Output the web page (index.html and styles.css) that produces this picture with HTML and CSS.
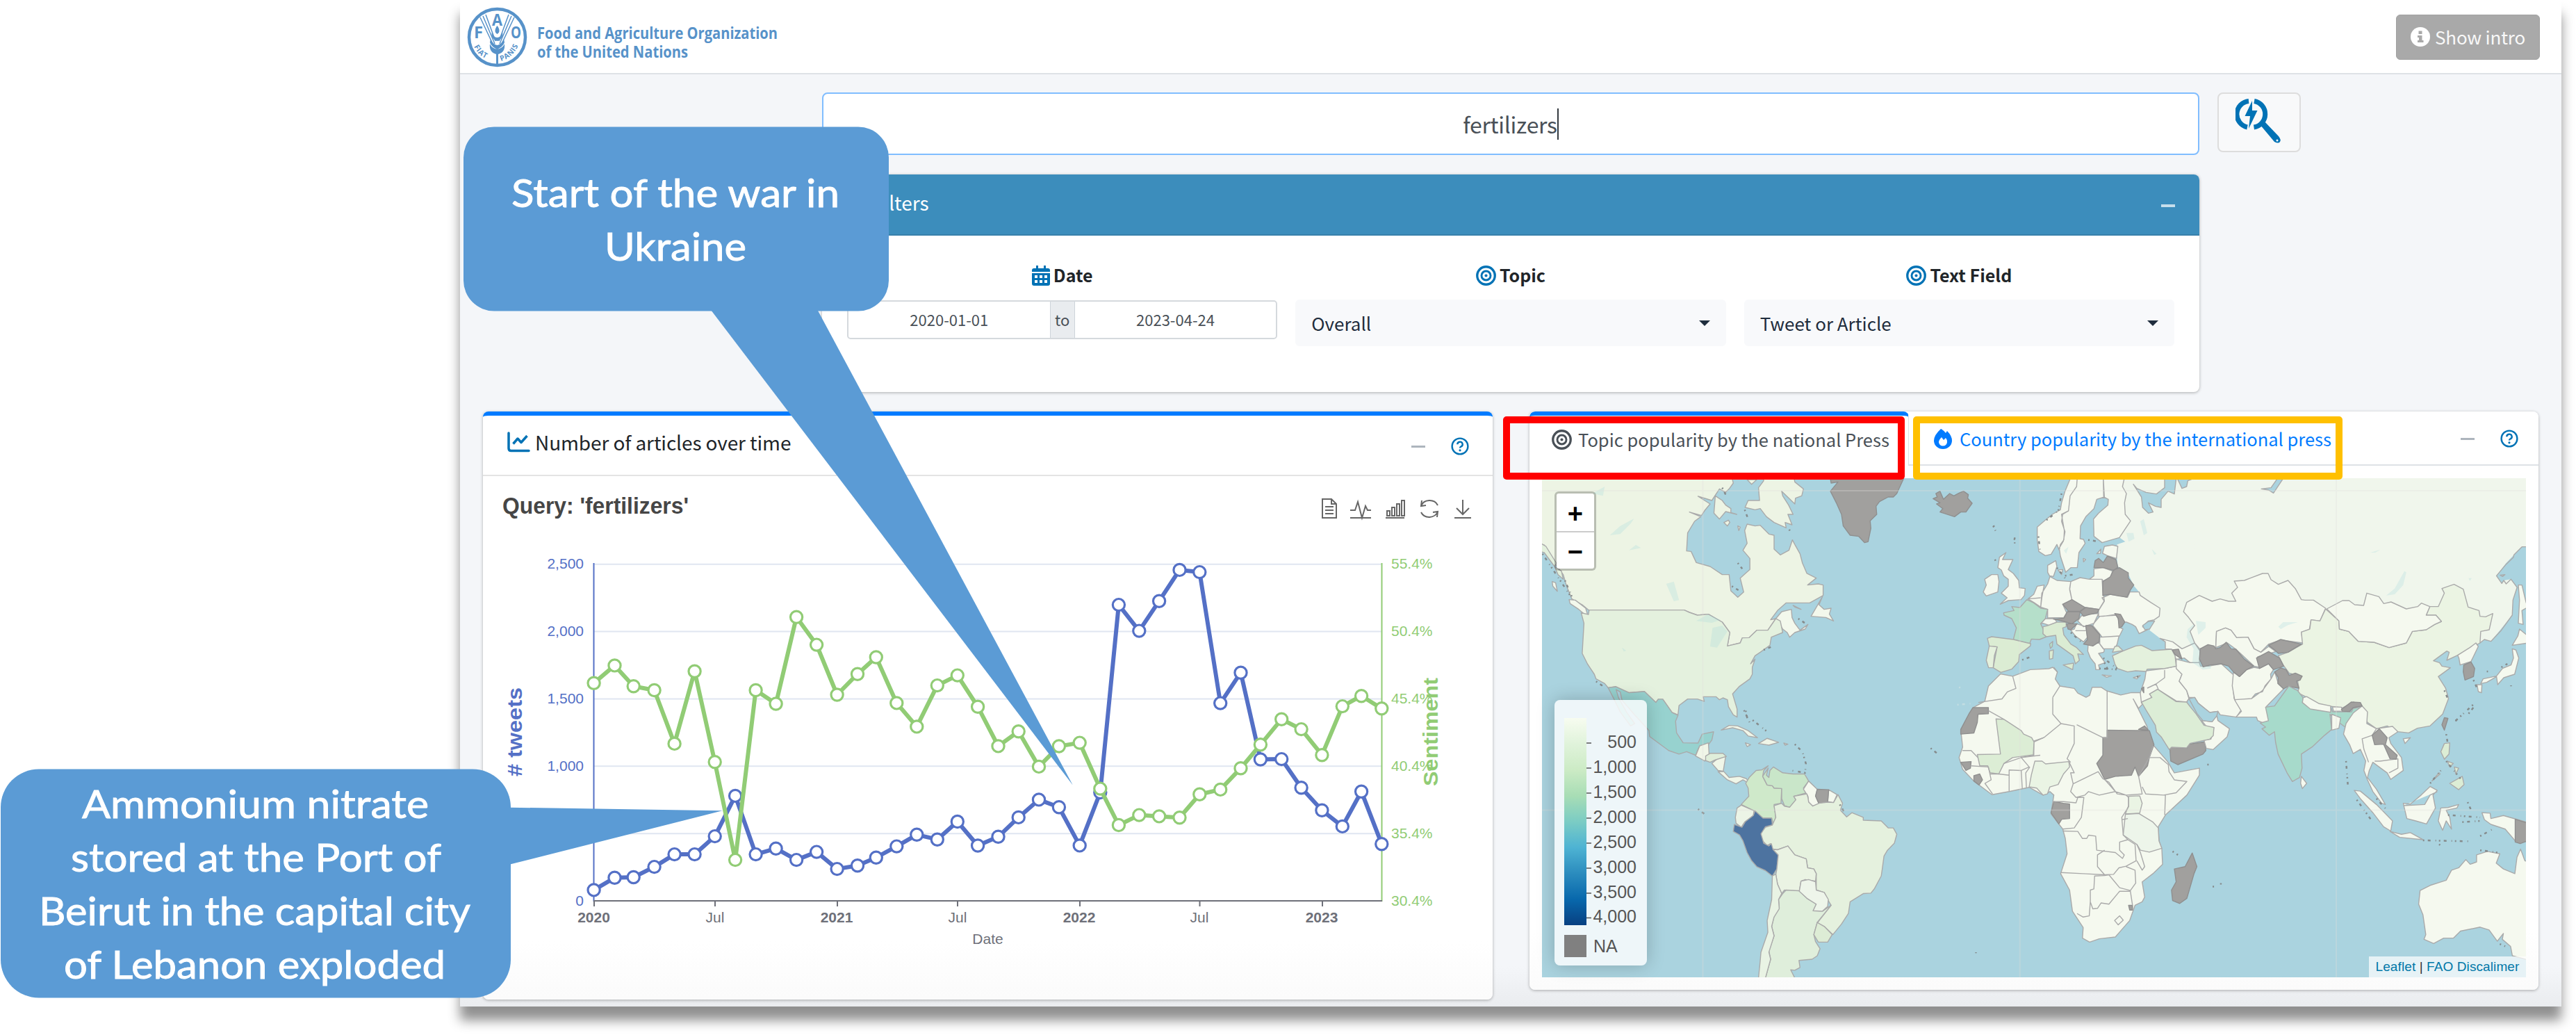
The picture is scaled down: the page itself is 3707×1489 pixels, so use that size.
FILE: index.html
```html
<!DOCTYPE html>
<html lang="en">
<head>
<meta charset="utf-8">
<title>FAO Data Lab – fertilizers</title>
<link rel="stylesheet" href="styles.css">
</head>
<body>
<svg width="0" height="0" class="defs">
  <symbol id="i-target" viewBox="0 0 28 28"><g fill="none" stroke="currentColor"><circle cx="14" cy="14" r="12.3" stroke-width="3.2"/><circle cx="14" cy="14" r="6.3" stroke-width="2.8"/></g><circle cx="14" cy="14" r="2" fill="currentColor"/></symbol>
  <symbol id="i-help" viewBox="0 0 26 26"><circle cx="13" cy="13" r="11.4" fill="none" stroke="currentColor" stroke-width="2.4"/><path d="M9.3 10.2a3.7 3.5 0 1 1 5.4 3.1c-1.3.7-1.7 1.2-1.7 2.2" fill="none" stroke="currentColor" stroke-width="2.4"/><circle cx="13" cy="18.8" r="1.6" fill="currentColor"/></symbol>
</svg>
<div class="slide">
  <div class="dashboard">
    <header class="topbar">
      <svg class="logo" viewBox="670 8 480 92">
        <circle cx="715.5" cy="53.5" r="40.5" fill="#fff" stroke="#5792c9" stroke-width="4.5"/>
        <g class="logo-letters"><text x="682" y="54.5" textLength="13" lengthAdjust="spacingAndGlyphs">F</text><text x="708" y="37" textLength="15" lengthAdjust="spacingAndGlyphs">A</text><text x="735" y="54.5" textLength="15" lengthAdjust="spacingAndGlyphs">O</text></g>
        <g fill="none" stroke="#5792c9" stroke-width="1.5"><path d="M691 25l18 38M695 23l17 40M699 21l14 38M740 25l-18 38M736 23l-17 40M732 21l-14 38"/></g>
        <path fill="#5792c9" d="M715.5 37c4 5 4 10 0 12c-4-2-4-7 0-12zM708 46c1 5 4 8 7.500 8s6.500-3 7.500-8c2 6-2 12-7.500 13c-5.500-1-9.500-7-7.500-13zM706 56c2 5 5 8 9.500 9c4.500-1 7.500-4 9.500-9l1 5c-2 5-6 8-10.500 10c-4.500-2-8.500-5-10.500-10zM705 63c2 5 6 7 10.500 8c4.500-1 8.500-3 10.500-8c1 8-2 13-9 15v16h-3v-16c-7-2-10-7-9-15z"/>
        <path id="motto-l" d="M682 67q8 17 29 21" fill="none"/><path id="motto-r" d="M721 88q21-6 28-32" fill="none"/>
        <text class="motto"><textPath href="#motto-l">FIAT</textPath></text><text class="motto"><textPath href="#motto-r">PANIS</textPath></text>
        <g class="org"><text x="773" y="56" textLength="346" lengthAdjust="spacingAndGlyphs">Food and Agriculture Organization</text><text x="773" y="82.500" textLength="217" lengthAdjust="spacingAndGlyphs">of the United Nations</text></g>
      </svg>
      <button class="intro"><svg width="28" height="28" viewBox="0 0 28 28"><circle cx="14" cy="14" r="14" fill="#fff"/><path d="M11.500 5.500h5v4.500h-5zM10 12h6.500v7h2v3h-8.500v-3h2v-4h-2z" fill="#a9a9a9"/></svg>Show intro</button>
    </header>
    <main>
      <div class="searchrow">
        <div class="searchbox"><span>fertilizers</span><i class="caret"></i></div>
        <button class="go"><svg width="66" height="66" viewBox="0 0 66 66"><g fill="none" stroke="#0072b5" stroke-width="7"><path d="M19 4.500A19 19 0 0 0 17 42"/><path d="M27 4.500A19 19 0 0 1 26.500 42"/></g><path fill="#0072b5" d="M24 4L13.500 26h7.500L19 44L31.500 18h-7.500zM35 38l6-5L62 55q4 5 2 8t-8 0z"/><circle cx="60" cy="61" r="1.500" fill="#fff"/></svg></button>
      </div>
      <section class="filters">
        <div class="filters-head"><svg width="28" height="28" viewBox="0 0 28 28"><path d="M1 2h26L17 14v12l-6-4v-8z" fill="#fff"/></svg><span>Filters</span><i class="minus"></i></div>
        <div class="filters-body">
          <div class="field"><div class="label"><svg width="26" height="29" viewBox="0 0 26 29"><path fill="#0072b5" d="M6 0h3v4h8V0h3v4h3q3 0 3 3v2H0V7q0-3 3-3h3zM0 11h26v15q0 3-3 3H3q-3 0-3-3z"/><path fill="#fff" d="M4 14h4v4H4zM11 14h4v4h-4zM18 14h4v4h-4zM4 21h4v4H4zM11 21h4v4h-4zM18 21h4v4h-4z"/></svg><span>Date</span></div>
            <div class="daterange"><span>2020-01-01</span><b>to</b><span>2023-04-24</span></div></div>
          <div class="field"><div class="label"><svg width="29" height="29"><use href="#i-target"/></svg><span>Topic</span></div><div class="select">Overall<i></i></div></div>
          <div class="field"><div class="label"><svg width="29" height="29"><use href="#i-target"/></svg><span>Text Field</span></div><div class="select">Tweet or Article<i></i></div></div>
        </div>
      </section>
      <div class="cards">
        <section class="card chartcard">
          <div class="card-head"><svg width="33" height="30" viewBox="0 0 33 30"><g fill="none" stroke="#0072b5" stroke-width="3.500" stroke-linecap="round" stroke-linejoin="round"><path d="M2 2v22q0 3.500 3.500 3.500H31"/><path d="M8.500 17.500L15 10l5 5.500L28.500 6" stroke-linecap="butt"/></g></svg><h2>Number of articles over time</h2><i class="minus grey"></i><svg class="help" width="26" height="26"><use href="#i-help"/></svg></div>
          <svg class="chart" viewBox="695 684 1453 752">
            <defs>
              <marker id="mb" markerUnits="userSpaceOnUse" markerWidth="24" markerHeight="24" refX="12" refY="12"><circle cx="12" cy="12" r="8.600" fill="#fff" stroke="#5470c6" stroke-width="3.200"/></marker>
              <marker id="mg" markerUnits="userSpaceOnUse" markerWidth="24" markerHeight="24" refX="12" refY="12"><circle cx="12" cy="12" r="8.600" fill="#fff" stroke="#91cc75" stroke-width="3.200"/></marker>
            </defs>
            <text class="query" x="723" y="738" textLength="268" lengthAdjust="spacingAndGlyphs">Query: 'fertilizers'</text>
            <g class="tools">
              <path d="M1903 717h13l7 7v20h-20zM1916 717v7h7M1907 728h12M1907 733h12M1907 738h12"/>
              <path d="M1943 733h7l4-12l6 23l5-17l3 6h5M1943 744h30"/>
              <path d="M1994 744h27M1996 734h4v7h-4zM2003 729h4v12h-4zM2010 724h4v17h-4zM2017 719h4v22h-4z"/>
              <path d="M2045 727a13 12 0 0 1 24-1M2069 735a13 12 0 0 1-24 1M2046 719l-1 8l7-1M2068 743l1-8l-7 1"/>
              <path d="M2105 718v20M2096 730l9 9l9-9M2093 744h24"/>
            </g>
            <g stroke="#e0e6f1" stroke-width="2"><path d="M855 810.700H1988M855 907.600H1988M855 1004.500H1988M855 1101.300H1988M855 1198.200H1988"/></g>
            <path d="M854.500 809v487" stroke="#5470c6" stroke-width="2"/><path d="M1988.500 809v487" stroke="#91cc75" stroke-width="2"/>
            <path d="M854 1295h1135M855 1295v8M1029 1295v8M1205 1295v8M1378 1295v8M1554 1295v8M1726.500 1295v8M1903 1295v8" stroke="#6e7079" stroke-width="2" fill="none"/>
            <g class="tick blue"><text x="840" y="817">2,500</text><text x="840" y="914">2,000</text><text x="840" y="1011">1,500</text><text x="840" y="1107.500">1,000</text><text x="840" y="1204.500">500</text><text x="840" y="1301.500">0</text></g>
            <g class="tick green"><text x="2002" y="817">55.4%</text><text x="2002" y="914">50.4%</text><text x="2002" y="1011">45.4%</text><text x="2002" y="1107.500">40.4%</text><text x="2002" y="1204.500">35.4%</text><text x="2002" y="1301.500">30.4%</text></g>
            <g class="tick grey"><text class="yr" x="854.500" y="1326">2020</text><text x="1029" y="1326">Jul</text><text class="yr" x="1204" y="1326">2021</text><text x="1378" y="1326">Jul</text><text class="yr" x="1553" y="1326">2022</text><text x="1726" y="1326">Jul</text><text class="yr" x="1902" y="1326">2023</text><text x="1421.500" y="1356.500">Date</text></g>
            <text class="axis" fill="#5470c6" transform="translate(751 1116) rotate(-90)" textLength="128" lengthAdjust="spacingAndGlyphs"># tweets</text>
            <text class="axis" fill="#91cc75" transform="translate(2068.500 1130) rotate(-90)" textLength="156" lengthAdjust="spacingAndGlyphs">Sentiment</text>
            <polyline class="line b" points="854.6,1279.4 884.5,1261.8 911.7,1261 941.6,1246.1 970.6,1228.1 999.6,1228.1 1028.7,1202.1 1058.1,1143.9 1087.6,1228.1 1116.6,1219.7 1146.1,1236.1 1175.1,1224.6 1204.6,1249.1 1234,1244.2 1260.8,1232.7 1290.3,1216.6 1319.3,1199.8 1348.8,1206.7 1377.8,1181 1407.1,1215.5 1436.5,1202.8 1465.7,1174.9 1495,1149.4 1523.9,1160.3 1553.7,1215.4 1583.3,1139 1609.9,869.1 1639.3,906.6 1668.1,863.7 1697.5,818.9 1726.3,822.1 1756.2,1010.6 1785.5,966.7 1813.9,1091.5 1844.2,1091.1 1872.6,1132.2 1902.4,1164.8 1931.8,1187.9 1959.1,1137.7 1988.3,1213.2"/>
            <polyline class="line g" points="854.6,981.7 884.5,956.4 911.7,986.3 941.6,992 970.6,1068.9 999.6,964.8 1028.7,1095.3 1058.1,1236.1 1087.6,992 1116.6,1011.5 1146.1,886.8 1175.1,926.6 1204.6,998.5 1234,968.7 1260.8,944.5 1290.3,1010.4 1319.3,1044.4 1348.8,985.1 1377.8,970.6 1407.1,1015.7 1436.5,1072.4 1465.7,1051.3 1495,1101.9 1523.9,1072.5 1553.7,1067.6 1583.3,1133.6 1609.9,1186 1639.3,1171.6 1668.1,1173.4 1697.5,1175.2 1726.3,1141.7 1756.2,1134.9 1785.5,1104.2 1813.9,1070.3 1844.2,1033.7 1872.6,1048.1 1902.4,1085.2 1931.8,1015.1 1959.1,1000.2 1988.3,1018.3"/>
          </svg>
        </section>
        <section class="card mapcard">
          <div class="tabs">
            <div class="tab active"><svg width="29" height="29"><use href="#i-target"/></svg><span>Topic popularity by the national Press</span></div>
            <div class="tab rest"><svg width="26" height="29" viewBox="0 0 26 29"><path fill="#007bff" fill-rule="evenodd" d="M10 0q4 2 7 6l2-3q7 7 7 14a13 12 0 0 1-26 0Q0 9 10 0zM11 12q-4 4-4 7a6 5.500 0 0 0 12 0q0-4-2-6l-3 3z"/></svg><span>Country popularity by the international press</span><i class="minus grey"></i><svg class="help" width="26" height="26"><use href="#i-help"/></svg></div>
          </div>
          <div class="map">
<svg class="world" viewBox="2219 688 1416 718">
<!-- North America -->
<g transform="translate(2160 580) scale(.49745 .33333)">
<path fill="#edf4e4" d="M110 300L110 610 125 612 160 700 180 740 190 790 205 845 235 870 255 895 530 893 545 903 568 915 600 911 640 945 662 990 655 1048 692 1035 698 1013 718 1012 740 980 772 980 795 930 780 935 800 895 825 862 893 862 932 830 932 785 918 780 887 785 912 755 885 735 872 690 865 650 850 610 843 590 833 635 808 655 790 630 790 570 775 565 750 527 735 530 712 522 705 550 712 605 700 635 720 670 720 718 692 755 702 815 685 838 665 810 660 740 640 740 605 705 565 688 550 640 537 638 540 560 560 510 578 490 545 470 580 485 590 462 605 435 570 402 610 420 632 370 650 385 660 370 672 345 665 300Z"/>
<path fill="#e2f0dc" d="M110 600L130 618 160 690 155 705 125 645 110 640ZM155 705L175 725 180 760 165 740Z"/>
<path fill="#edf4e4" d="M620 400L640 420 650 440 665 455 665 472 682 480 650 468 632 500 616 475ZM755 300L760 335 745 365 748 420 715 420 706 450 735 460 750 455 768 490 790 515 825 538 822 515 842 525 830 480 845 480 832 440 815 400 812 380 850 435 852 410 870 400 875 370 850 340 845 300ZM645 515L658 505 662 515 655 530ZM685 530L692 535 688 550ZM712 330L725 350 740 330Z"/>
<path fill="#f3f8ec" d="M930 835L920 870 935 890 955 885 950 910 962 940 940 925 897 920ZM795 930L812 900 840 890 842 925 850 950 865 980 888 955 880 975 850 990 835 1010 828 990 815 975ZM197 848L215 850 245 885 253 925 225 890 200 865ZM845 873L868 890 850 880ZM148 770L158 775 163 812 150 790Z"/>
<path fill="#e4f1de" d="M232 905L253 912 255 893 530 893 545 903 568 915 600 911 640 945 662 990 655 1048 692 1035 698 1013 718 1012 740 980 772 980 795 930 808 940 815 990 782 1010 778 1045 750 1075 735 1090 722 1125 735 1105 727 1140 727 1170 720 1190 690 1222 670 1255 683 1320 683 1355 672 1345 658 1310 655 1280 642 1272 632 1280 622 1267 585 1267 588 1287 568 1277 540 1277 515 1305 512 1345 495 1335 468 1278 455 1278 448 1292 415 1245 370 1250 333 1232 332 1223 310 1228 300 1210 275 1190 270 1170 250 1125 235 1080 240 950Z"/>
<path class="na" d="M950 300L955 345 975 340 953 380 970 430 985 480 990 530 1010 570 1035 575 1052 602 1062 598 1070 540 1068 508 1087 480 1085 445 1095 425 1120 405 1135 405 1145 390 1165 325 1165 300ZM1250 412L1262 405 1258 390 1270 380 1280 415 1298 390 1310 400 1325 388 1338 380 1352 395 1350 410 1363 432 1345 470 1330 470 1312 490 1270 470 1278 455 1260 435 1270 430Z"/>
<path class="islets" d="M640 365L655 410M705 460L715 500M685 690L698 715M668 790L690 810M860 930L890 960M760 1065L785 1050M703 1325L720 1380M120 650L200 830M1425 528L1430 550M1486 580L1486 605M834 545L838 560M185 765L205 835"/>
<path class="lake" d="M565 940L598 912 635 935 610 948ZM605 1050L612 970 640 960 655 985 625 1055ZM315 570L345 530 385 498 375 520 345 565ZM478 780L500 770 515 850 500 855ZM370 635L390 612 405 625ZM265 390L300 360 295 400ZM350 1055L362 1068 355 1072Z"/>
</g>
<!-- Central and South America -->
<g transform="translate(2160 960) scale(.49745 .33737)">
<path fill="#97d2cf" d="M310 87L333 83 370 108 415 103 448 150 455 136 468 136 495 193 512 205 505 230 508 280 527 322 570 323 582 285 615 275 610 310 600 330 575 335 570 350 563 375 537 360 515 370 485 355 430 295 428 270 385 200 350 140 345 105 333 95 340 130 365 195 387 240 375 250 345 190 325 130Z"/>
<path fill="#f0f6e8" d="M575 335L600 322 602 370 590 400 563 378ZM610 410L630 385 650 380 643 443 628 440ZM628 445L645 445 660 470 690 465 710 475 718 495 700 480 680 497 655 480ZM637 268L660 248 685 250 715 270 742 300 715 293 700 270 670 258ZM745 325L770 303 803 320 775 332ZM707 322L722 330 712 338ZM818 323L830 328 822 332Z"/>
<path fill="#dfeeda" d="M592 378L605 367 642 367 652 380 620 395 605 405 592 398Z"/>
<path fill="#cfe9ca" d="M773 420L760 440 757 465 770 502 785 505 790 515 812 517 810 580 790 585 795 640 788 670 783 643 758 643 732 612 695 585 717 550 715 515 708 495 718 470 738 440 755 437Z"/>
<path fill="#c9e6c9" d="M773 430L768 460 775 470 778 440 788 425 815 450 845 455 878 455 890 485 875 515 885 535 847 550 853 565 835 597 820 590 812 560 812 517 790 515 785 505 770 502 757 465Z"/>
<path class="land" d="M890 485L915 520 910 548 920 582 902 592 890 575 888 550 875 520ZM948 522L972 543 962 577 945 573Z"/>
<path class="na" d="M915 520L948 522 945 575 920 582 910 550Z"/>
<path fill="#e5f1de" d="M847 550L885 540 888 555 890 575 902 592 920 580 945 575 962 577 975 543 988 580 982 610 1000 638 1015 620 1048 640 1048 652 1100 655 1120 685 1135 685 1145 712 1138 750 1118 780 1108 805 1103 860 1100 890 1080 945 1070 963 1048 965 1010 1000 1005 1050 985 1095 960 1140 935 1105 915 1090 955 1015 945 990 935 960 912 950 912 880 905 860 887 855 883 817 850 800 830 762 800 778 785 775 780 752 770 760 750 730 752 705 765 682 785 672 795 640 790 590 812 580 820 592 835 597 853 565Z"/>
<path fill="#ecf4e6" d="M695 588L732 612 730 632 705 660 695 682 680 665 678 640 683 600Z"/>
<path fill="#4d73a0" d="M735 612L758 643 783 643 785 672 765 680 752 710 760 750 775 762 782 752 787 777 802 800 798 860 785 890 765 867 740 850 725 825 712 790 700 740 690 715 672 700 675 670 697 682 707 658 730 632Z"/>
<path fill="#eaf3e3" d="M787 777L800 778 830 762 850 800 883 817 887 855 905 860 912 880 910 912 880 905 868 912 863 955 820 950 812 965 800 925 795 885 798 860 802 800Z"/>
<path fill="#dfeedb" d="M815 965L825 950 863 953 885 985 912 1010 903 1038 930 1040 955 1015 915 1088 905 1140 910 1170 923 1200 915 1230 900 1245 862 1250 865 1280 850 1292 838 1290 850 1325 765 1325 780 1245 775 1210 790 1145 783 1105 790 1060 805 1025 803 990Z"/>
<path fill="#eef5ea" d="M868 912L890 905 910 915 912 950 935 960 947 990 945 1020 930 1040 903 1038 912 1010 885 985 863 955Z"/>
<path fill="#ddecd5" d="M915 1088L935 1105 958 1140 945 1172 918 1172 905 1140Z"/>
<path fill="#e9f3e4" d="M785 890L795 882 800 925 812 965 803 990 805 1030 790 1065 783 1105 790 1145 775 1215 780 1245 765 1325 745 1325 750 1250 752 1215 772 1130 770 1080 783 990Z"/>
<path class="islets" d="M708 185L715 235M728 225L768 272M850 328L872 360 882 410 880 450 840 440M570 605L588 625M1243 345L1268 375M980 585L992 615M275 60L295 80M1374 1215v4"/>
</g>
<!-- Africa -->
<g transform="translate(2900 960) scale(.51467 .33737)">
<path class="land" d="M-41 28L-7 38 42 10 94 6 105 0 118 20 112 50 125 80 165 90 175 110 198 128 208 120 215 85 240 85 255 100 295 118 325 108 350 108 360 150 345 175 330 135 345 180 368 250 385 330 405 365 425 400 445 450 515 430 515 460 480 545 420 630 400 680 402 740 410 775 412 840 385 880 355 915 362 980 355 1000 335 1015 320 1080 280 1150 235 1158 208 1172 188 1155 190 1110 160 1040 152 950 127 880 145 795 140 730 133 690 100 625 105 575 108 545 97 530 78 545 39 512 -17 530 -65 543 -116 485 -147 435 -157 385 -147 340 -152 270 -118 172 -85 145 -75 80Z"/>
<path fill="#eaf4e4" d="M55 400L75 400 85 412 150 402 152 425 135 455 120 500 97 510 90 540 78 545 60 515 39 510 45 460ZM317 550L348 548 355 580 348 622 308 625 317 590Z"/>
<path fill="#edf5ea" d="M308 627L345 623 385 660 400 685 402 740 410 772 375 788 350 780 340 755 302 715Z"/>
<path class="na" d="M257 268L375 270 388 330 375 385 370 420 345 465 335 425 325 460 280 465 250 478 228 410 245 375 245 300 257 300ZM345 265L362 250 372 268ZM108 573L135 580 152 583 152 645 130 648 122 668 100 620ZM495 792L508 850 500 880 480 985 460 1007 440 995 437 950 450 915 445 860 475 850ZM317 1015L328 1015 328 1035 320 1035Z"/>
<path class="na" d="M432 340L480 345 485 328 530 318 533 355 525 370 455 415 435 400Z"/>
<path class="edge" d="M52 315L80 300 128 240 165 250 165 325 145 390 155 405M172 245L245 300 257 300 257 100M-7 38L2 90-22 105-37 135-103 150M52 315L52 375 15 385M150 402L165 450 155 450 162 497 232 445 245 475 262 490 285 540 310 545 355 540 345 465M162 497L155 530 170 555 195 545 205 530 235 545 280 530 250 478M108 573L135 573 170 578 175 555 192 555 185 640 165 685 133 690M280 530L310 545 317 555 317 595 298 640 302 715 315 735 292 745 292 780 305 800 300 815 280 790 228 780 225 720 205 716 200 730 188 730 175 700 133 698M127 875L190 880 250 885 230 850 230 800 250 780M250 885L275 883 290 855 310 848 338 825 335 755 315 735M262 885L292 940 322 952 337 920 335 865 310 850M262 885L250 888 222 890 220 945 210 950 210 1000 217 1030 230 1028 240 1005 262 1010 292 955 322 955 328 1015M173 1050L190 1065 207 1060 210 1000M340 755L350 790 362 850 355 865 340 825M345 465L375 385 405 385 428 415 430 445 445 480 480 487 450 535 415 545 365 540 355 510M420 545L418 630M375 385L385 335M278 1080L292 1060 302 1078 288 1098ZM298 650L315 645M118 20L108 0M105 128L105 200 128 240M105 128L125 80"/>
</g>
<g transform="translate(2160 960) scale(.49745 .33737)">
<path fill="#dcedd5" d="M1432 220L1455 222 1505 270 1512 285 1535 300 1542 318 1540 373 1480 385 1455 410 1440 455 1415 450 1408 420 1385 420 1378 372 1445 370Z"/>
<path class="na" d="M1365 172L1410 172 1410 198 1380 200 1378 235 1368 280 1330 285 1330 265 1355 195ZM1330 405L1360 402 1358 430 1345 440ZM1368 462L1385 455 1393 480 1383 502 1368 485Z"/>
<path class="edge" d="M1410 185L1455 222M1335 355L1360 355 1380 385M1360 420L1410 425 1418 480 1400 495 1422 540M1415 455L1440 455 1470 460M1455 410L1505 385 1528 425 1505 440 1470 438 1470 530M1505 440L1508 518M1530 425L1518 450 1520 515M1542 318L1570 300M1505 385L1560 375"/>
<path class="islets pale" d="M1320 160L1358 155M1325 85L1330 88"/>
</g>
<!-- Europe and Middle East -->
<g transform="translate(2780 660) scale(.33333)">
<path fill="#f0f6ec" stroke="none" class="bare" d="M830 80L823 120 840 150 832 190 835 240 858 268 810 340 835 358 800 370 797 410 803 465 845 490 870 545 895 575 900 590 945 620 985 645 982 680 960 695 940 740 985 775 1040 790 1080 820 1135 800 1200 780 1400 700 1400 80Z"/>
<path class="land" d="M600 80L575 140 560 190 555 220 520 240 490 265 455 295 455 350 462 400 490 418 515 412 540 370 550 395 555 370 570 350 572 310 560 240 590 225 597 160 625 120 628 80ZM628 80L625 120 597 160 590 225 565 240 560 270 575 315 568 355 550 385 555 420 578 490 600 470 628 470 635 405 662 365 655 348 640 345 642 290 665 250 700 215 712 175 745 165 740 80ZM740 80L742 165 762 175 760 200 720 235 698 260 700 335 735 362 810 340 858 268 835 240 832 190 840 150 823 120 832 80Z"/>
<path class="land" d="M320 405L305 435 350 435 330 478 352 495 375 525 378 557 403 560 400 590 385 608 330 612 295 628 325 600 300 580 330 550 330 520 310 505 300 480 285 470 292 425ZM258 500L285 500 290 530 285 575 235 592 222 575 235 545 228 520ZM500 490L500 460 535 440 540 465 525 508 508 505ZM545 480L565 478 560 500ZM654 430L664 435 655 445ZM712 410L730 390 728 408Z"/>
<path class="land" d="M510 508L540 525 600 530 595 560 605 610 565 628 582 665 570 685 500 687 500 650 470 640 475 580 500 540ZM440 585L455 550 485 545 475 600 470 640 440 620 415 605ZM415 605L470 600M600 530L640 513 680 520 735 520 738 570 745 612 722 650 660 642 605 610 595 565ZM737 408L745 378 780 372 803 378 797 430 758 418ZM700 475L740 470 780 485 770 515 740 528 735 520 680 520 700 505ZM470 712L490 690 530 690 540 705 515 722 480 710ZM630 700L645 678 685 670 720 668 700 710 655 725ZM700 710L725 680 800 675 815 730 825 735 810 765 735 770 720 750 695 720ZM725 770L808 765 800 800 790 820 740 820 725 800ZM600 740L615 735 625 712 665 725 672 770 655 790 620 765ZM620 742L665 742M675 800L722 795 745 825 742 835 720 840 748 880 720 890 725 910 708 910 705 885 685 860 673 830ZM735 933L775 937 755 943ZM870 945L900 935 885 950ZM735 600L770 585 815 592 845 598 855 575 895 575 900 590 945 620 985 645 982 680 960 695 935 700 910 725 930 738 895 755 880 725 865 715 840 705 833 705 805 670 740 680 720 680 720 655 745 615ZM985 775L1040 790 1080 820 1135 795 1158 830 1155 880 1115 880 1090 860 1055 865 1035 822 1008 820 1008 790ZM925 915L1010 905 1055 895 1080 930 1068 960 1100 1000 1110 1035 1100 1050 1055 1045 975 995 940 1015 950 1030 905 1055 900 1010 920 950ZM1005 912L1005 945 968 972 930 990M968 972L978 995"/>
<path class="land" d="M1055 905L1055 865 1115 880 1155 880 1160 895 1195 895 1250 885 1305 935 1300 980 1305 1035 1335 1085 1315 1115 1245 1105 1235 1090 1200 1095 1150 1055 1135 1030 1110 1030 1100 1000 1068 960 1080 930ZM1165 1130L1210 1135 1230 1105 1235 1130 1285 1165 1275 1200 1215 1255 1185 1250 1175 1215 1205 1210 1218 1160 1185 1155Z"/>
<path fill="#b5dfca" d="M310 665L355 655 345 638 380 642 410 608 440 622 470 645 500 650 490 690 470 712 483 740 480 755 495 768 465 780 430 778 422 798 352 780 365 730 345 690 312 675ZM508 800L522 788 520 810 512 818Z"/>
<path fill="#dbecd3" d="M240 775L258 768 352 780 427 798 425 808 378 845 375 875 345 908 298 922 265 902 282 812 248 808ZM480 725L500 720 540 705 580 705 580 725 565 730 570 760 600 800 625 815 655 845 630 842 637 870 620 885 610 850 540 800 535 762 495 768 480 755ZM567 890L612 882 608 910ZM507 830L525 825 522 862 508 865Z"/>
<path fill="#e4f1dd" d="M248 808L282 812 270 850 265 902 245 902 235 870ZM780 850L825 830 880 808 905 805 950 828 1035 822 1050 850 1055 895 1005 905 930 908 925 918 880 915 845 920 800 905 790 885ZM780 835L790 810 805 808 825 828Z"/>
<path fill="#dcedd6" d="M905 1050L950 1030 940 1015 975 995 1055 1048 1100 1050 1115 1070 1140 1100 1175 1150 1218 1160 1215 1195 1200 1210 1115 1228 1100 1248 1035 1245 1025 1255 990 1200 970 1180 965 1150 925 1085Z"/>
<path class="na" d="M738 530L770 510 785 480 810 470 848 492 848 515 872 545 858 565 842 597 808 592 770 585 738 590ZM700 470L705 440 720 430 740 448 758 420 795 435 803 468 785 482 740 470ZM565 628L605 608 662 642 640 658 590 658ZM640 660L665 642 720 650 715 665 680 672 655 680ZM525 692L570 688 585 660 640 660 635 690 605 712 570 702ZM582 712L628 712 600 738 588 735ZM790 668L815 672 833 705 820 725 808 730 805 690ZM665 720L690 720 725 760 722 790 695 808 655 800 672 780ZM1038 825L1065 822 1080 865 1050 845ZM905 992L915 985 915 1010Z"/>
<path class="sea" d="M870 110L905 165 910 210 935 235 955 230 935 190 965 205 990 210 990 175 1020 140 1047 152 1055 85 1005 85 1005 125 970 152 925 145 885 128ZM1060 85L1080 128 1100 120 1105 95 1130 85ZM910 720L935 702 962 700 940 735 920 738ZM1110 1035L1135 1030 1150 1055 1200 1095 1235 1090 1230 1110 1210 1135 1170 1130 1145 1100Z"/>
<path class="islets" d="M495 265L545 225M460 335L468 400M275 440L268 425M265 290L275 310M355 345L362 355M575 505L610 500M540 470L575 515M740 860L800 905M745 880L760 910M600 750L650 795M390 868L440 850M560 150L545 230M675 350L725 358"/>
<path class="lake" d="M840 320L870 320 875 345 850 358ZM900 270L915 260 930 320 915 330ZM1130 715L1150 700 1185 705 1180 730 1150 745 1160 790 1195 800 1200 850 1205 905 1170 910 1125 880 1130 820 1100 770 1105 735ZM570 395L590 380 580 410ZM950 390L970 410 960 415Z"/>
</g>
<!-- Asia -->
<g transform="translate(3160 580) scale(.34885 .33333)">
<path fill="#f0f6ec" class="bare" d="M-10 300L1370 300 1370 620 1345 620 1312 655 1280 690 1240 745 1262 778 1270 765 1300 760 1325 795 1308 850 1305 915 1217 1028 1190 1020 1172 1035 1175 980 900 980 0 940Z"/>
<path class="edge" d="M1370 620L1345 620 1312 655 1310 665 1280 695 1240 745 1262 778 1270 765 1280 780 1300 760 1325 795 1308 850 1305 915 1260 980 1217 1028 1190 1020 1172 1035"/>
<path class="sea" d="M270 370L310 365 340 320 360 325 320 388 300 375ZM1255 742L1275 740 1265 748Z"/>
<path class="land" d="M-51 900L-38 860 14 830 67 855 100 845 135 855 165 855 148 820 172 795 158 768 200 765 225 755 275 735 298 735 310 762 340 782 380 765 410 800 435 848 450 850 485 850 535 885 512 940 475 935 468 978 435 988 442 1035 350 1022 300 1040 268 1075 240 1060 215 1010 168 1012 145 980 122 970 85 985 82 1055 15 1060 -5 1035 -24 985 -5 960 -30 925Z"/>
<path class="land" d="M82 1055L85 985 122 970 145 980 168 1012 215 1010 240 1060 268 1075 300 1050 330 1072 255 1095 262 1140 240 1135 165 1062 130 1035ZM155 1160L180 1180 210 1150 240 1140 262 1145 300 1125 320 1150 308 1170 310 1190 285 1220 275 1245 245 1255 230 1275 160 1280 150 1220ZM160 1280L230 1275 275 1240 310 1190 325 1160 340 1210 362 1233 290 1310 302 1372 300 1390 255 1370 250 1355 165 1355 188 1330 165 1290Z"/>
<path fill="#ebf4e3" d="M535 888L590 940 592 975 630 985 670 1028 735 1032 797 1055 868 1035 893 985 950 978 985 955 1013 942 990 915 950 915 965 878 1000 878 1025 820 1015 800 1065 782 1103 803 1123 880 1168 895 1172 920 1195 922 1225 908 1210 978 1175 985 1172 1035 1080 1088 1035 1110 1045 1075 1035 1070 980 1112 1005 1120 1015 1135 1050 1142 1000 1180 1030 1230 1042 1275 1018 1342 966 1393 914 1403 878 1423 833 1418 789 1393 745 1405 708 1378 693 1342 686 1307 650 1290 605 1315 570 1310 520 1305 455 1268 420 1250 425 1230 420 1200 438 1180 385 1165 360 1130 340 1090 380 1075 440 1040 435 988 470 975 475 935 512 940Z"/>
<path class="land" d="M540 888L605 852 632 852 655 870 692 873 705 820 755 835 775 865 805 858 868 888 915 878 930 863 965 878 950 915 990 915 1013 942 985 955 950 978 893 985 868 1035 797 1055 735 1032 670 1028 630 985 592 975 590 940ZM1080 1088L1130 1055 1155 1035 1165 1050 1135 1115 1090 1130 1085 1100ZM1370 1005L1335 975 1328 1005 1305 1045 1370 1035ZM1305 1060L1320 1065 1332 1100 1315 1170 1270 1185 1245 1215 1240 1180 1200 1205 1175 1210 1185 1190 1240 1178 1265 1145 1300 1130 1310 1100ZM1160 1215L1180 1215 1178 1250 1165 1245ZM1330 785L1345 785 1362 860 1370 880 1345 895 1350 955 1330 950 1335 850Z"/>
<path class="na" d="M18 1060L50 1042 75 1048 82 1060 100 1055 125 1032 145 1060 165 1062 200 1105 238 1135 210 1150 180 1180 155 1160 135 1135 105 1125 60 1130 30 1138 15 1105ZM300 1045L350 1020 435 1040 380 1075 340 1080 325 1065ZM250 1100L300 1072 345 1100 362 1135 320 1150 300 1125 262 1145ZM325 1160L350 1143 372 1150 385 1175 410 1165 438 1178 430 1195 415 1200 425 1230 380 1222 362 1233 338 1210 340 1185ZM1105 1130L1135 1117 1150 1145 1145 1180 1110 1195 1103 1160Z"/>
<path class="islets" d="M1125 1340L1155 1300M1070 1370L1090 1365M1025 1240L1045 1290M1145 1195L1160 1230M1260 1140L1285 1125M1200 1158h5M1300 1218v4"/>
<path class="lake" d="M785 830L820 800 860 725 868 730 855 785 820 825ZM340 965L360 945 420 945 380 958 350 975ZM0 940L40 945 40 970 10 1000ZM720 645L760 632 740 645ZM1125 755L1138 755 1130 767Z"/>
</g>
<!-- South Asia and Oceania -->
<g transform="translate(2900 960) scale(.51467 .33737)">
<path fill="#a7dacb" d="M765 80L790 100 805 130 803 150 830 178 880 180 882 168 887 190 940 190 945 175 968 170 950 195 935 230 925 258 905 235 890 215 880 200 885 265 865 290 830 340 800 370 802 430 795 470 775 487 760 450 735 370 728 320 725 275 710 290 690 262 700 255 685 238 708 228 700 170 725 165Z"/>
<path class="land" d="M805 130L815 125 850 155 882 165 882 192 825 178 803 150ZM887 168L912 170 915 187 890 187ZM885 200L910 215 905 260 885 268ZM800 465L815 495 803 517 798 495ZM945 195L970 165 985 190 983 240 1010 262 1055 252 1070 275 1045 300 1050 325 1080 385 1085 440 1050 478 1040 450 1022 430 1000 405 990 440 985 470 1010 520 1035 585 1025 580 1000 530 985 480 975 440 980 400 965 350 945 368 935 330 918 285 925 240ZM1085 305L1105 300 1090 325Z"/>
<path class="edge" d="M1010 262L998 290 970 305 975 350 988 405M1020 400L1070 390 1070 430 1045 450M1005 400L1020 400"/>
<path class="na" d="M912 180L940 148 965 150 970 165 945 172 935 188 915 187ZM998 290L1018 262 1040 300 1035 330 1068 375 1065 392 1048 390 1030 328 1005 330ZM1200 215L1210 218 1200 268 1193 245Z"/>
<path fill="#dcedd5" d="M1200 325L1215 322 1213 370 1200 392 1190 360ZM1215 495L1250 465 1255 500 1240 522ZM1185 450L1188 455 1165 485ZM1208 400L1225 410 1215 425ZM1228 425L1240 430 1232 455Z"/>
<path class="land" d="M948 525L965 528 1010 585 1055 655 1050 698 1030 680 1000 620 965 560ZM1048 700L1080 712 1105 705 1140 735 1075 725ZM1085 580L1105 583 1135 545 1160 508 1180 525 1168 545 1175 600 1150 668 1120 655 1095 645ZM1085 590L1145 585 1160 545 1180 530M1190 600L1210 598 1240 585 1235 600 1205 610 1215 640 1220 690 1205 655 1195 695 1183 655ZM1305 620L1328 622 1330 645 1365 632 1440 665 1440 745 1398 740 1370 690 1330 670 1312 650ZM1132 952L1160 930 1205 908 1220 865 1240 855 1260 820 1272 840 1290 830 1290 800 1320 785 1355 795 1345 835 1365 860 1397 880 1403 810 1413 775 1425 825 1440 830 1440 1250 1390 1230 1385 1190 1362 1160 1365 1135 1348 1168 1325 1120 1300 1108 1245 1125 1225 1155 1198 1155 1170 1178 1143 1160 1148 1140 1140 1055 1128 1010Z"/>
<path class="na" d="M1398 648L1440 668 1440 735 1412 752 1398 745Z"/>
<path class="islets" d="M925 400L930 500M955 565L995 650M1140 738L1270 742M1205 400L1245 475M1265 575L1275 610M1210 630L1300 640M1250 660L1300 655M1300 720L1335 690M1160 495L1190 440M1300 780L1350 790M1355 1180L1370 1190M1010 560L1040 610M440 785L455 800M1280 160L1230 230M1205 285L1210 330M537 415h6M552 935h6M575 920v6M1185 755L1195 765M340 40h10M235 5L290 10"/>
</g>
<path class="grat" d="M2219 706H3635M2219 1165.500H3635M2450.500 688V1406M2906.700 688V1406M3362 688V1406"/>
</svg>
            <div class="zoomctl"><span>+</span><span>−</span></div>
            <svg class="legend" viewBox="2237 1007 133 382">
              <defs><linearGradient id="ramp" x1="0" y1="0" x2="0" y2="1"><stop offset="0" stop-color="#f7fcf0"/><stop offset=".125" stop-color="#e0f3db"/><stop offset=".25" stop-color="#ccebc5"/><stop offset=".375" stop-color="#a8ddb5"/><stop offset=".5" stop-color="#7bccc4"/><stop offset=".625" stop-color="#4eb3d3"/><stop offset=".75" stop-color="#2b8cbe"/><stop offset=".875" stop-color="#0868ac"/><stop offset="1" stop-color="#084081"/></linearGradient></defs>
              <rect x="2251" y="1033" width="32" height="298" fill="url(#ramp)"/><rect x="2251" y="1345" width="32" height="32" fill="#808080"/>
              <path d="M2283 1069h7M2283 1105h7M2283 1141h7M2283 1177h7M2283 1213h7M2283 1249h7M2283 1285h7M2283 1320.500h7" stroke="#555" stroke-width="1.600"/>
              <g text-anchor="end"><text x="2355" y="1075.500">500</text><text x="2355" y="1111.500">1,000</text><text x="2355" y="1147.500">1,500</text><text x="2355" y="1183.500">2,000</text><text x="2355" y="1219.500">2,500</text><text x="2355" y="1255.500">3,000</text><text x="2355" y="1291.500">3,500</text><text x="2355" y="1327">4,000</text></g>
              <text x="2293" y="1370">NA</text>
            </svg>
            <div class="attrib"><a>Leaflet</a> | <a>FAO Discalimer</a></div>
          </div>
        </section>
      </div>
    </main>
  </div>
  <div class="mark red"></div>
  <div class="mark amber"></div>
  <svg class="callouts" viewBox="0 0 3707 1489">
    <g fill="#5b9bd5">
      <rect x="667" y="182.500" width="612" height="265" rx="44"/><path d="M1023 446H1176.500L1543.800 1129.500Z"/>
      <rect x="1" y="1106.500" width="734" height="329" rx="55"/><path d="M734 1161.700L1039.600 1166.300 734 1243.500Z"/>
    </g>
    <g class="note">
      <text x="736" y="298" textLength="472" lengthAdjust="spacingAndGlyphs">Start of the war in</text>
      <text x="870" y="375" textLength="204" lengthAdjust="spacingAndGlyphs">Ukraine</text>
      <text x="118" y="1177" textLength="499" lengthAdjust="spacingAndGlyphs">Ammonium nitrate</text>
      <text x="102" y="1254" textLength="533" lengthAdjust="spacingAndGlyphs">stored at the Port of</text>
      <text x="56" y="1331" textLength="621" lengthAdjust="spacingAndGlyphs">Beirut in the capital city</text>
      <text x="92" y="1408" textLength="549" lengthAdjust="spacingAndGlyphs">of Lebanon exploded</text>
    </g>
  </svg>
</div>
</body>
</html>
```
FILE: styles.css
```css
* { box-sizing: border-box; }
body { margin: 0; background: #fff; font-family: "Noto Sans CJK SC", "Noto Sans", sans-serif; color: #212529; }
.defs { position: absolute; }
.slide { position: relative; width: 3707px; height: 1489px; overflow: hidden; }
.dashboard { width: 3024px; height: 1448px; margin-left: 662px; background: linear-gradient(#f4f6f9 0 1390px, #eaecef); box-shadow: 0 20px 16px rgba(0, 0, 0, .44); }
button { font: inherit; padding: 0; margin: 0; }

.topbar { display: flex; justify-content: space-between; align-items: flex-start; height: 107px; padding: 8px 31px 0 8px; background: #fff; border-bottom: 2px solid #dee2e6; }
.logo { width: 480px; height: 92px; overflow: visible; }
.logo-letters { font: 700 23px "Open Sans", sans-serif; fill: #5792c9; }
.motto { font: 700 10.500px "Open Sans", sans-serif; fill: #5792c9; letter-spacing: .6px; }
.org { font: 700 23px "Open Sans", sans-serif; fill: #5792c9; }
.intro { display: flex; align-items: center; justify-content: center; gap: 7px; width: 207px; height: 65px; margin-top: 12.500px; background: #a9a9a9; border: 1px solid #a0a0a0; border-radius: 6px; color: #f8f8f8; font-size: 26px; line-height: 40px; letter-spacing: -.2px; }

main { padding-top: 26px; }
.searchrow { display: flex; gap: 26px; margin-left: 521px; height: 90px; }
.searchbox { display: flex; align-items: center; justify-content: center; width: 1982px; height: 90px; background: #fff; border: 2px solid #80bdff; border-radius: 8px; font-size: 32px; line-height: 48px; color: #495057; }
.searchbox span { letter-spacing: -.3px; }
.caret { width: 2px; height: 45px; background: #343a40; }
.go { display: grid; place-items: center; width: 120px; height: 86px; background: #f8f9fa; border: 2px solid #ddd; border-radius: 8px; padding-right: 2px; padding-bottom: 4px; }

.filters { width: 1982px; height: 313px; margin: 28px 0 0 521px; background: #fff; border-radius: 8px; box-shadow: 0 1px 4px rgba(0, 0, 0, .3); overflow: hidden; }
.filters-head { display: flex; align-items: center; gap: 9px; height: 88px; padding: 0 35px 6px 36px; background: #3c8dbc; border-bottom: 2px solid #3880ab; color: #fff; font-size: 28px; line-height: 40px; }
.filters-head .minus { margin: 9px 0 0 auto; background: #c6deec; }
.minus { width: 20px; height: 4px; background: #fff; }
.minus.grey { background: #adb5bd; height: 3px; }
.filters-body { display: grid; grid-template-columns: repeat(3, 1fr); gap: 26px; padding: 35px 36px 0; }
.label { display: flex; align-items: center; justify-content: center; gap: 5px; height: 44px; margin-bottom: 14px; font-weight: 700; font-size: 25px; line-height: 38px; }
.label span { margin-bottom: 2px; }
.label svg, .tab svg { color: #0072b5; flex: none; }
.daterange { display: grid; grid-template-columns: 1fr 36px 1fr; height: 56px; border: 2px solid #d5d9dd; border-radius: 5px; font-size: 22px; line-height: 51px; text-align: center; color: #495057; }
.daterange b { font-weight: 400; background: #e9ecef; border: solid #ced4da; border-width: 0 1px; }
.select { display: flex; align-items: center; justify-content: space-between; height: 67px; margin-top: -1px; padding: 0 23px; background: #f8f9fb; border-radius: 6px; font-size: 26px; line-height: 38px; color: #1f2d3d; }
.select i { border: 8px solid transparent; border-top: 8px solid #1f2d3d; border-bottom: 0; }

.cards { display: flex; gap: 53px; margin: 28px 0 0 33px; align-items: flex-start; }
.card { background: linear-gradient(#fff 90%, #fbfbfb); border-radius: 8px; box-shadow: 0 1px 4px rgba(0, 0, 0, .3); overflow: hidden; }
.chartcard { width: 1453px; height: 846px; border-top: 6px solid #007bff; }
.card-head { display: flex; align-items: center; height: 87px; padding: 0 34px 10px 35px; border-bottom: 2px solid #e4e4e4; }
.card-head h2 { margin: 0 auto 0 7px; font-size: 28px; font-weight: 400; line-height: 40px; letter-spacing: -.1px; }
.card-head .minus, .card-head .help { margin-top: 13px; }
.help { color: #0072b5; margin: 0 0 0 37px; flex: none; }
.chart { display: block; width: 1453px; height: 752px; }
.query { font: 700 33px "Liberation Sans", sans-serif; fill: #464646; }
.tools { fill: none; stroke: #666; stroke-width: 2; }
.tick { font: 21px "Liberation Sans", sans-serif; }
.tick.blue { fill: #5470c6; text-anchor: end; }
.tick.green { fill: #91cc75; }
.tick.grey { fill: #6e7079; text-anchor: middle; }
.tick .yr { font-weight: 700; }
.axis { font: 700 30px "Liberation Sans", sans-serif; }
.line { fill: none; stroke-width: 6; stroke-linejoin: bevel; }
.line.b { stroke: #5470c6; marker: url(#mb); }
.line.g { stroke: #91cc75; marker: url(#mg); }

.mapcard { width: 1452px; height: 832px; }
.tabs { display: flex; height: 78px; }
.tab { display: flex; align-items: center; font-size: 25.500px; line-height: 40px; }
.tab.active { width: 546px; padding: 0 0 4px 32px; border-top: 6px solid #007bff; border-right: 1px solid #dee2e6; border-radius: 8px 8px 0 0; color: #495057; gap: 9px; }
.tab.active svg { color: #495057; }
.tab.rest { flex: 1; padding: 2px 29px 0 36px; border-bottom: 2px solid #dee2e6; color: #007bff; gap: 11px; }
.tab .minus { margin-left: auto; }
.tab .help { color: #0072b5; margin-left: 26px; }
.map { position: relative; width: 1416px; height: 718px; margin: 18px 0 0 18px; background: #aad3df; }
.world { display: block; width: 1416px; height: 718px; }
.world path { vector-effect: non-scaling-stroke; stroke: #aaa; stroke-width: 1.400; stroke-linejoin: round; }
.world .land { fill: #f5f9ef; }
.world .na { fill: #a1a09e; stroke: #8f8f8f; }
.world .sea { fill: #aad3df; }
.world .edge { fill: none; }
.world .bare { stroke: none; }
.world .grat { fill: none; stroke: #e2dfdc; stroke-opacity: .3; stroke-width: 2; }
.world .islets { fill: none; stroke: #858b8c; stroke-width: 2.500; stroke-dasharray: 2 5 4 7 1 4; }
.world .pale { stroke: #c3dde2; }
.world .lake { fill: #9fd6dc; fill-opacity: .25; stroke: none; }
.zoomctl { position: absolute; left: 18px; top: 19px; width: 60px; height: 114px; border: 3px solid rgba(0, 0, 0, .22); border-radius: 6px; background: #fff; background-clip: padding-box; font: 700 38px/64px "Liberation Mono", monospace; color: #000; text-align: center; }
.zoomctl span { display: block; height: 54px; }
.zoomctl span + span { border-top: 2px solid #ccc; line-height: 62px; }
.legend { position: absolute; left: 18px; top: 319px; width: 133px; height: 382px; background: rgba(255, 255, 255, .8); border-radius: 8px; box-shadow: 0 0 26px rgba(0, 0, 0, .22); font: 25px "Liberation Sans", sans-serif; fill: #555; }
.attrib { position: absolute; right: 0; bottom: 0; width: 226px; height: 30px; background: rgba(255, 255, 255, .7); font: 19px/30px "Liberation Sans", sans-serif; text-align: center; white-space: nowrap; letter-spacing: .1px; color: #333; }
.attrib a { color: #0078a8; }

.mark { position: absolute; top: 599px; height: 91px; border: 10px solid #f00; border-radius: 5px; }
.mark.red { left: 2163px; width: 578px; }
.mark.amber { left: 2753px; width: 618px; border-color: #ffc000; }
.callouts { position: absolute; left: 0; top: 0; width: 3707px; height: 1489px; }
.note { fill: #fff; stroke: #fff; stroke-width: .9px; font: 400 57px Lato, sans-serif; }
```
